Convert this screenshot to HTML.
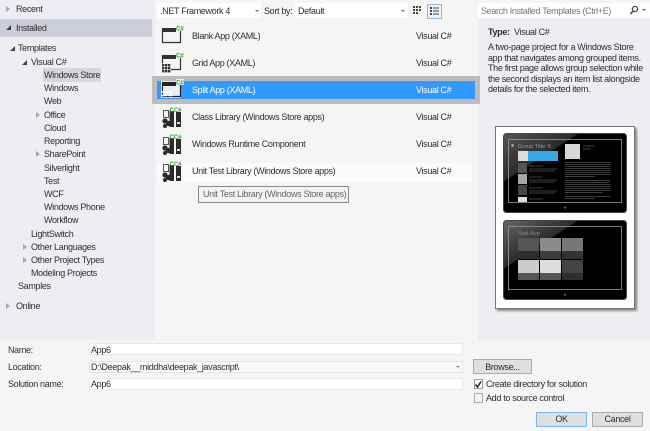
<!DOCTYPE html>
<html><head><meta charset="utf-8"><style>
html,body{margin:0;padding:0}
body{width:650px;height:431px;overflow:hidden;position:relative;background:#f5f5f5}
#w{position:absolute;left:0;top:0;width:650px;height:431px;overflow:hidden;background:#f5f5f5;font-family:"Liberation Sans",sans-serif;font-size:9px;letter-spacing:-.33px;color:#2e2e2e;filter:blur(.3px)}
.t{position:absolute;line-height:14px;white-space:nowrap}
.b{position:absolute;box-sizing:border-box}
.tri{position:absolute;width:0;height:0;border-left:4px solid #a8a8a8;border-top:3px solid transparent;border-bottom:3px solid transparent}
.open{position:absolute;width:0;height:0;border-bottom:5px solid #444;border-left:5px solid transparent}
svg{position:absolute;overflow:visible}
svg text{letter-spacing:0}
</style></head><body><div id="w">
<div class="b" style="left:0;top:0;width:155px;height:340px;background:#eeeef2"></div>
<div class="b" style="left:478px;top:18px;width:172px;height:322px;background:#eeeef2"></div>
<div class="b" style="left:0;top:19px;width:152px;height:18px;background:#ccced9"></div>
<div class="b" style="left:43px;top:68px;width:58px;height:14px;background:#d5d6e0"></div>

<div class="tri" style="left:6px;top:6px"></div><div class="t" style="left:16px;top:2px">Recent</div>
<div class="open" style="left:6px;top:25px"></div><div class="t" style="left:16px;top:21px">Installed</div>
<div class="open" style="left:10px;top:46px"></div><div class="t" style="left:18px;top:41px">Templates</div>
<div class="open" style="left:22px;top:60px"></div><div class="t" style="left:31px;top:55px">Visual C#</div>
<div class="t" style="left:44px;top:68px">Windows Store</div>
<div class="t" style="left:44px;top:81px">Windows</div>
<div class="t" style="left:44px;top:94px">Web</div>
<div class="tri" style="left:36px;top:112px"></div><div class="t" style="left:44px;top:108px">Office</div>
<div class="t" style="left:44px;top:121px">Cloud</div>
<div class="t" style="left:44px;top:134px">Reporting</div>
<div class="tri" style="left:36px;top:151px"></div><div class="t" style="left:44px;top:147px">SharePoint</div>
<div class="t" style="left:44px;top:161px">Silverlight</div>
<div class="t" style="left:44px;top:174px">Test</div>
<div class="t" style="left:44px;top:187px">WCF</div>
<div class="t" style="left:44px;top:200px">Windows Phone</div>
<div class="t" style="left:44px;top:213px">Workflow</div>
<div class="t" style="left:31px;top:227px">LightSwitch</div>
<div class="tri" style="left:23px;top:244px"></div><div class="t" style="left:31px;top:240px">Other Languages</div>
<div class="tri" style="left:23px;top:257px"></div><div class="t" style="left:31px;top:253px">Other Project Types</div>
<div class="t" style="left:31px;top:266px">Modeling Projects</div>
<div class="t" style="left:18px;top:279px">Samples</div>
<div class="tri" style="left:6px;top:303px"></div><div class="t" style="left:16px;top:299px">Online</div>

<!-- toolbar -->
<div class="b" style="left:157px;top:3px;width:104px;height:15px;background:#fff"></div>
<div class="t" style="left:160px;top:4px">.NET Framework 4</div>
<div class="b" style="left:255px;top:10px;border-top:2px solid #777;border-left:2px solid transparent;border-right:2px solid transparent"></div>
<div class="t" style="left:264px;top:4px">Sort by:</div>
<div class="b" style="left:295px;top:3px;width:113px;height:15px;background:#fff"></div>
<div class="t" style="left:298px;top:4px">Default</div>
<div class="b" style="left:401px;top:10px;border-top:2px solid #777;border-left:2px solid transparent;border-right:2px solid transparent"></div>
<svg style="left:413px;top:6px" width="10" height="10"><g fill="#444"><rect x="0" y="0" width="2" height="2"/><rect x="3" y="0" width="2" height="2"/><rect x="6" y="0" width="2" height="2"/><rect x="0" y="3" width="2" height="2"/><rect x="3" y="3" width="2" height="2"/><rect x="6" y="3" width="2" height="2"/><rect x="0" y="6" width="2" height="2"/><rect x="3" y="6" width="2" height="2"/></g></svg>
<div class="b" style="left:427px;top:4px;width:15px;height:15px;background:#eef3fa;border:1px solid #8fb6dc"></div>
<svg style="left:430px;top:7px" width="10" height="10"><g fill="#444"><rect x="0" y="0" width="2" height="2"/><rect x="0" y="3" width="2" height="2"/><rect x="0" y="6" width="2" height="2"/><rect x="3" y="0.5" width="6" height="1"/><rect x="3" y="3.5" width="6" height="1"/><rect x="3" y="6.5" width="6" height="1"/></g></svg>
<div class="b" style="left:478px;top:3px;width:172px;height:15px;background:#fff"></div>
<div class="t" style="left:481px;top:4px;color:#777">Search Installed Templates (Ctrl+E)</div>
<svg style="left:630px;top:5px" width="16" height="10"><circle cx="5" cy="4" r="2.6" fill="none" stroke="#444" stroke-width="1.3"/><path d="M3 6L0.5 9" stroke="#444" stroke-width="1.5"/><path d="M12 4h4l-2 2z" fill="#666"/></svg>

<!-- rows -->
<div class="b" style="left:152px;top:76px;width:328px;height:28px;background:#bcbcbc"></div>
<div class="b" style="left:157px;top:81px;width:318px;height:18px;background:#3399ff"></div>
<div class="b" style="left:157px;top:163px;width:315px;height:19px;background:#fbfbfb"></div>

<svg style="left:162px;top:25px" width="22" height="20"><path d="M0.5 3.5v14h18V3.5" fill="#f5f5f5" stroke="#333" stroke-width="1.2"/><rect x="0" y="3" width="14" height="4" fill="#333"/><rect x="14" y="0" width="8" height="6" fill="#f0f0f0"/><text x="14" y="5.5" font-size="6" font-weight="bold" fill="#3c9a3c" font-family="Liberation Sans">C#</text></svg>
<svg style="left:162px;top:52px" width="22" height="21"><path d="M0.5 3.5v8M9 17.5h9.5V3.5" fill="none" stroke="#333" stroke-width="1.2"/><rect x="0" y="3" width="14" height="4" fill="#333"/><rect x="14" y="0" width="8" height="6" fill="#f0f0f0"/><text x="14" y="5.5" font-size="6" font-weight="bold" fill="#3c9a3c" font-family="Liberation Sans">C#</text><g fill="#333"><rect x="0" y="12" width="2.4" height="2.4"/><rect x="3" y="12" width="2.4" height="2.4"/><rect x="6" y="12" width="2.4" height="2.4"/><rect x="0" y="15" width="2.4" height="2.4"/><rect x="3" y="15" width="2.4" height="2.4"/><rect x="6" y="15" width="2.4" height="2.4"/><rect x="0" y="18" width="2.4" height="2.4"/><rect x="3" y="18" width="2.4" height="2.4"/><rect x="6" y="18" width="2.4" height="2.4"/></g></svg>
<svg style="left:161px;top:79px" width="23" height="20"><rect x="0" y="2" width="20" height="17" fill="#dfe6ee"/><path d="M1.5 4v13.5h18V4" fill="#e9edf2" stroke="#222" stroke-width="1.2"/><rect x="1" y="3" width="14" height="4" fill="#222"/><rect x="15" y="0" width="8" height="6" fill="#e8f0e8"/><text x="15" y="5.5" font-size="6" font-weight="bold" fill="#3c9a3c" font-family="Liberation Sans">C#</text><path d="M0 13h11M0 16.5h6M7.5 16.5h4" stroke="#fff" stroke-width="1.6"/></svg>
<svg width="0" height="0"><defs><g id="lib"><path d="M1.5 3.5h5v7h-5z" fill="none" stroke="#555"/><rect x="7.5" y="4" width="4.5" height="16" fill="#2a2a2a"/><rect x="14" y="5" width="5" height="15" fill="#2a2a2a"/><rect x="15" y="15" width="3" height="2" fill="#ddd"/><circle cx="3" cy="14" r="2.6" fill="#2a2a2a"/><circle cx="6.5" cy="16.5" r="2.6" fill="#2a2a2a"/><circle cx="3" cy="19" r="2" fill="#2a2a2a"/><text x="7.5" y="5" font-size="6" font-weight="bold" fill="#3c9a3c" font-family="Liberation Sans">CC#</text></g></defs></svg>
<svg style="left:162px;top:107px" width="22" height="20"><use href="#lib"/></svg>
<svg style="left:162px;top:134px" width="22" height="20"><use href="#lib"/></svg>
<svg style="left:162px;top:161px" width="22" height="20"><use href="#lib"/></svg>

<div class="t" style="left:192px;top:29px">Blank App (XAML)</div><div class="t" style="left:416px;top:29px">Visual C#</div>
<div class="t" style="left:192px;top:56px">Grid App (XAML)</div><div class="t" style="left:416px;top:56px">Visual C#</div>
<div class="t" style="left:192px;top:83px;color:#fff">Split App (XAML)</div><div class="t" style="left:416px;top:83px;color:#fff">Visual C#</div>
<div class="t" style="left:192px;top:110px">Class Library (Windows Store apps)</div><div class="t" style="left:416px;top:110px">Visual C#</div>
<div class="t" style="left:192px;top:137px">Windows Runtime Component</div><div class="t" style="left:416px;top:137px">Visual C#</div>
<div class="t" style="left:192px;top:164px">Unit Test Library (Windows Store apps)</div><div class="t" style="left:416px;top:164px">Visual C#</div>
<div class="b" style="left:198px;top:186px;width:151px;height:17px;background:#f3f3f3;border:1px solid #888"></div>
<div class="t" style="left:203px;top:187px;color:#666">Unit Test Library (Windows Store apps)</div>

<!-- details -->
<div class="t" style="left:488px;top:25px"><b>Type:</b>&nbsp; Visual C#</div>
<div class="t" style="left:488px;top:42px;line-height:10.6px">A two-page project for a Windows Store<br>app that navigates among grouped items.<br>The first page allows group selection while<br>the second displays an item list alongside<br>details for the selected item.</div>

<div class="b" style="left:495px;top:126px;width:140px;height:183px;background:#fff;border:1px solid #777;box-shadow:2px 2px 2px #888"></div>
<!-- tablet 1 -->
<svg style="left:503px;top:133px" width="124" height="80" viewBox="0 0 124 80">
<defs><linearGradient id="g" x1="0" y1="0" x2="1" y2="1"><stop offset="0" stop-color="#555"/><stop offset=".3" stop-color="#2a2a2a"/><stop offset=".31" stop-color="#000"/><stop offset="1" stop-color="#000"/></linearGradient></defs>
<rect x=".5" y=".5" width="123" height="79" rx="3" fill="url(#g)" stroke="#444"/>
<rect x="5.5" y="6.5" width="113" height="63" fill="none" stroke="#999" stroke-width=".8"/>
<circle cx="9.5" cy="12.5" r="1.2" fill="#bbb"/>
<text x="15" y="15" font-size="5.5" fill="#999" font-family="Liberation Sans">Group Title: 6</text>
<rect x="15" y="18" width="40" height="10" fill="#35a8e6"/><rect x="15" y="18" width="10" height="10" fill="#ddd"/>
<rect x="15" y="30" width="9" height="10" fill="#555"/><rect x="15" y="41" width="9" height="10" fill="#a5a5a5"/><rect x="15" y="52" width="9" height="10" fill="#444"/><rect x="15" y="64" width="9" height="5" fill="#ddd"/>
<g stroke="#777" stroke-width=".6"><path d="M26 33h14M26 36h28M26 38h26M26 44h14M26 47h28M26 49h26M26 55h14M26 58h28M26 60h26M26 66h14"/></g>
<rect x="62" y="11" width="15" height="15" fill="#d8d8d8"/>
<path d="M80 13h11M80 16h8" stroke="#888" stroke-width=".6"/>
<g stroke="#777" stroke-width=".6"><path d="M62 29.5h45M62 31.5h45M62 33.500h45M62 35.500h45M62 37.500h45M62 39.500h45M62 41.500h45M62 43.500h30M62 47.500h45M62 49.500h45M62 51.500h45M62 53.500h45M62 55.500h45M62 57.500h45M62 59.500h38M62 63.500h45M62 65.500h30"/></g>
<circle cx="62" cy="74.500" r="1.200" fill="#555"/></svg>
<!-- tablet 2 -->
<svg style="left:503px;top:220px" width="124" height="80" viewBox="0 0 124 80">
<defs><linearGradient id="g2" x1="0" y1="0" x2="1" y2="1"><stop offset="0" stop-color="#666"/><stop offset=".3" stop-color="#2a2a2a"/><stop offset=".31" stop-color="#000"/><stop offset="1" stop-color="#000"/></linearGradient></defs>
<rect x=".5" y=".5" width="123" height="79" rx="3" fill="url(#g2)" stroke="#444"/>
<rect x="5.5" y="6.500" width="113" height="63" fill="none" stroke="#999" stroke-width=".8"/>
<text x="15" y="15" font-size="5.5" fill="#888" font-family="Liberation Sans">Split App</text>
<rect x="15" y="18" width="21" height="21" fill="#2e2e2e"/><rect x="15" y="18" width="21" height="13" fill="#555"/>
<rect x="37" y="18" width="21" height="21" fill="#3c3c3c"/><rect x="37" y="18" width="21" height="13" fill="#8b8b8b"/>
<rect x="59" y="18" width="21" height="21" fill="#333"/><rect x="59" y="18" width="21" height="13" fill="#777"/>
<rect x="15" y="40" width="21" height="20" fill="#555"/><rect x="15" y="40" width="21" height="13" fill="#ccc"/>
<rect x="37" y="40" width="21" height="20" fill="#555"/><rect x="37" y="40" width="21" height="13" fill="#ddd"/>
<rect x="59" y="40" width="21" height="20" fill="#2e2e2e"/><rect x="59" y="40" width="21" height="13" fill="#444"/>
<circle cx="62" cy="74.500" r="1.200" fill="#555"/></svg>

<!-- bottom form -->
<div class="t" style="left:8px;top:343px">Name:</div>
<div class="t" style="left:8px;top:360px">Location:</div>
<div class="t" style="left:8px;top:377px">Solution name:</div>
<div class="b" style="left:89px;top:343px;width:374px;height:12px;background:#fff;border:1px solid #e8e8e8"></div>
<div class="b" style="left:89px;top:361px;width:374px;height:12px;background:#f9f9f9;border:1px solid #e4e4e4"></div>
<div class="b" style="left:89px;top:378px;width:374px;height:12px;background:#fff;border:1px solid #e8e8e8"></div>
<div class="t" style="left:91px;top:343px">App6</div>
<div class="t" style="left:91px;top:360px">D:\Deepak__middha\deepak_javascript\</div>
<div class="t" style="left:91px;top:377px">App6</div>
<div class="b" style="left:456px;top:366px;border-top:2px solid #888;border-left:2px solid transparent;border-right:2px solid transparent"></div>

<div class="b" style="left:473px;top:359px;width:59px;height:15px;background:#dfdfdf;border:1px solid #aaa"></div>
<div class="t" style="left:473px;top:360px;width:59px;text-align:center">Browse...</div>
<div class="b" style="left:474px;top:379px;width:9px;height:10px;background:#fbfbfb;border:1px solid #999"></div>
<svg style="left:474px;top:380px" width="9" height="9"><path d="M1.5 4.5L3.5 7L7 1.500" fill="none" stroke="#222" stroke-width="1.500"/></svg>
<div class="t" style="left:486px;top:377px">Create directory for solution</div>
<div class="b" style="left:474px;top:393px;width:9px;height:10px;background:#f5f5f5;border:1px solid #aaa"></div>
<div class="t" style="left:486px;top:391px">Add to source control</div>
<div class="b" style="left:536px;top:412px;width:51px;height:15px;background:#dcdfe3;border:1px solid #7eb4ea"></div>
<div class="t" style="left:536px;top:412px;width:51px;text-align:center">OK</div>
<div class="b" style="left:592px;top:412px;width:51px;height:15px;background:#dfdfdf;border:1px solid #aaa"></div>
<div class="t" style="left:592px;top:412px;width:51px;text-align:center">Cancel</div>
</div></body></html>
